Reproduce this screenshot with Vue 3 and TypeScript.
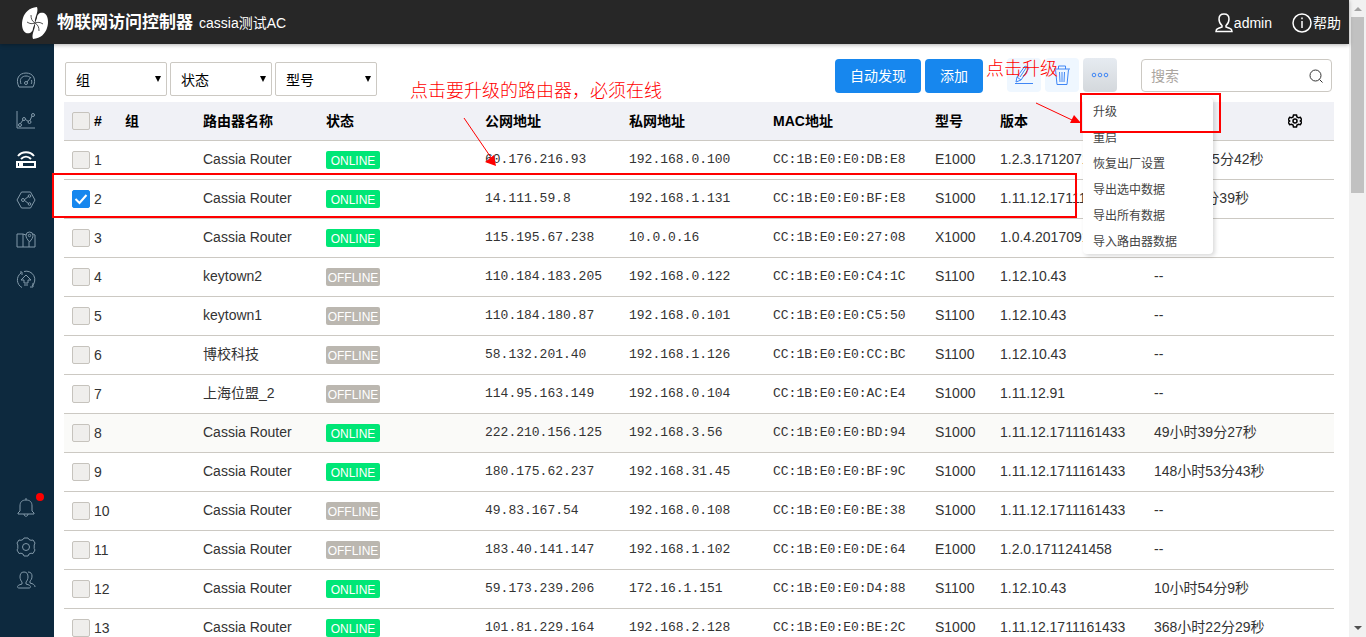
<script setup lang="ts">
import { ref } from 'vue'

interface Router {
  name: string
  online: boolean
  pub: string
  priv: string
  mac: string
  model: string
  version: string
  uptime: string
  selected?: boolean
}

const r = (
  name: string, online: boolean, pub: string, priv: string,
  mac: string, model: string, version: string, uptime: string, selected = false,
): Router => ({ name, online, pub, priv, mac: 'CC:1B:E0:E0:' + mac, model, version, uptime, selected })

const routers = ref<Router[]>([
  r('Cassia Router', true, '60.176.216.93', '192.168.0.100', 'DB:E8', 'E1000', '1.2.3.1712071433', '119小时35分42秒'),
  r('Cassia Router', true, '14.111.59.8', '192.168.1.131', 'BF:E8', 'S1000', '1.11.12.1711161433', '3小时23分39秒', true),
  r('Cassia Router', true, '115.195.67.238', '10.0.0.16', '27:08', 'X1000', '1.0.4.2017091433', '14分16秒'),
  r('keytown2', false, '110.184.183.205', '192.168.0.122', 'C4:1C', 'S1100', '1.12.10.43', '--'),
  r('keytown1', false, '110.184.180.87', '192.168.0.101', 'C5:50', 'S1100', '1.12.10.43', '--'),
  r('博校科技', false, '58.132.201.40', '192.168.1.126', 'CC:BC', 'S1100', '1.12.10.43', '--'),
  r('上海位盟_2', false, '114.95.163.149', '192.168.0.104', 'AC:E4', 'S1000', '1.11.12.91', '--'),
  r('Cassia Router', true, '222.210.156.125', '192.168.3.56', 'BD:94', 'S1000', '1.11.12.1711161433', '49小时39分27秒'),
  r('Cassia Router', true, '180.175.62.237', '192.168.31.45', 'BF:9C', 'S1000', '1.11.12.1711161433', '148小时53分43秒'),
  r('Cassia Router', false, '49.83.167.54', '192.168.0.108', 'BE:38', 'S1000', '1.11.12.1711161433', '--'),
  r('Cassia Router', false, '183.40.141.147', '192.168.1.102', 'DE:64', 'E1000', '1.2.0.1711241458', '--'),
  r('Cassia Router', true, '59.173.239.206', '172.16.1.151', 'D4:88', 'S1100', '1.12.10.43', '10小时54分9秒'),
  r('Cassia Router', true, '101.81.229.164', '192.168.2.128', 'BE:2C', 'S1000', '1.11.12.1711161433', '368小时22分29秒'),
])
const allSelected = ref(false)
const keyword = ref('')
const filters = ['组', '状态', '型号']
const menu = ['升级', '重启', '恢复出厂设置', '导出选中数据', '导出所有数据', '导入路由器数据']
</script>

<template>
  <div class="window">
    <div class="app">
      <header class="top">
        <svg class="logo" viewBox="0 0 28 34" aria-hidden="true">
          <path d="M16 1C8 2 4 6 2 12 0 18 1 25 5 27c4 1 7-1 7-5l2-5c-1-5 4-11 2-16z" fill="#fff" />
          <path d="M12 33c8-1 12-5 14-11 2-6 1-13-3-15-4-1-7 1-7 5l-2 5c1 5-4 11-2 16z" fill="#fff" />
          <path d="M10 9c0 4 1 6 4 8s4 4 4 8M6 16c3 2 5 2 8 1s5-1 8 1" stroke="#272727" stroke-width=".8" />
        </svg>
        <h1>物联网访问控制器</h1>
        <span class="site">cassia测试AC</span>
        <nav class="account">
          <a href="#admin">
            <svg class="person" viewBox="0 0 18 20"><path d="M9 1C5.800 1 4 3 4 6c0 3 1 5 3 6.500V14l-4 1.500C1.500 16 1 17 1 18.500h16c0-1.500-.5-2.500-2-3L11 14v-1.500C13 11 14 9 14 6c0-3-1.800-5-5-5z" /></svg>
            <span>admin</span>
          </a>
          <a href="#help">
            <svg class="info" viewBox="0 0 20 20"><circle cx="10" cy="10" r="9" /><path d="M10 8v7M10 4.500v1.800" /></svg>
            <span>帮助</span>
          </a>
        </nav>
      </header>

      <div class="body">
        <nav class="side">
          <div class="group">
            <a href="#dashboard" aria-label="dashboard"><svg viewBox="0 0 20 20"><path d="M3 17C-1 9 3 3 10 3s11 6 7 14zM5 14c-2-5 1-8 5-8 2 0 3 .5 4 1.500M15.500 10c.5 1.500.3 3-.3 4M11 12l4-5" /><circle cx="10" cy="13" r="1.500" /></svg></a>
            <a href="#chart" aria-label="chart"><svg viewBox="0 0 20 20"><path d="M1 1v17h18M4.500 13.500L7 10M9.500 9.500l3 2M14 10.500L16 6" /><circle cx="4" cy="15" r="1.500" /><circle cx="8" cy="9" r="1.500" /><circle cx="13.500" cy="12" r="1.500" /><circle cx="17" cy="5" r="1.500" /></svg></a>
            <a href="#routers" aria-label="routers" class="active"><svg viewBox="0 0 20 20"><path d="M1 12h18v5H1zM4 13v3M6 13v3M2 6c4-5 12-5 16 0M5 9c3-3 7-3 10 0" /></svg></a>
            <a href="#devices" aria-label="devices"><svg viewBox="0 0 20 20"><path d="M5.500 2h9l4.500 8-4.500 8h-9L1 10zM8 10l5-4M8 10l5 4" /><circle cx="7" cy="10" r="1.500" /><circle cx="13.500" cy="6" r="1.300" /><circle cx="13.500" cy="14" r="1.300" /></svg></a>
            <a href="#map" aria-label="map"><svg viewBox="0 0 20 20"><path d="M10 5L7 4 1 4v13h6l6 0h6V5l-2-1M7 4v13M13 12v5M13.500 12c-2.500-3-3.500-4.500-3.500-6.500a3.500 3.500 0 017 0c0 2-1 3.500-3.500 6.500z" /><circle cx="13.500" cy="5.500" r="1.200" /></svg></a>
            <a href="#upgrade" aria-label="upgrade"><svg viewBox="0 0 20 20"><path d="M6 17.500A8.500 8.500 0 015 3M8 1.500A8.500 8.500 0 0116 16M4 2h2v3M17 13v4h-3M10 5l5 5h-3v3H8v-3H5zM8 15h4" /></svg></a>
          </div>
          <div class="group tools">
            <a href="#alerts" aria-label="alerts" class="alerts"><svg viewBox="0 0 20 20"><path d="M10 1v2M4 14V9c0-4 2-6 6-6s6 2 6 6v5l2 2v1H2v-1zM8 17c0 3 4 3 4 0" /></svg><i class="dot"></i></a>
            <a href="#settings" aria-label="settings"><svg viewBox="0 0 20 20"><path d="M7 2.500L8 1h4l1 1.500 2 .8 2-.3 2 3-.8 2v3.500L19 13l-2 3.500-2-.3-2 .8L12 19H8l-1-2-2-.8-2 .3L1 13l.8-1.500V8L1 6l2-3 2 .3z" /><circle cx="10" cy="10" r="3.500" /></svg></a>
            <a href="#users" aria-label="users"><svg viewBox="0 0 20 20"><path d="M8 2C5 2 4 4 4 7c0 2 1 4 2 5v2l-3 1c-2 1-2 3 0 3h10c2 0 2-2 0-3l-3-1v-2c1-1 2-3 2-5 0-3-1-5-4-5zM12 2c3 0 4 2 4 4 0 3-1 4-2 5v2l3 1c1 1 2 1 2 3" /></svg></a>
          </div>
        </nav>

        <main>
          <div class="bar">
            <div class="filters">
              <label v-for="f in filters" :key="f" class="pick">
                <select :aria-label="f"><option>{{ f }}</option></select>
                <svg viewBox="0 0 6 6"><path d="M0 0h6L3 6z" /></svg>
              </label>
            </div>
            <div class="actions">
              <button type="button" class="blue">自动发现</button>
              <button type="button" class="blue">添加</button>
              <button type="button" class="tool edit" aria-label="edit">
                <svg viewBox="0 0 20 20"><path d="M3 12L11 1l4 2-8 12-5 2zM3 12l4 3M6 12l6-9M1 18.500h18" /></svg>
              </button>
              <button type="button" class="tool" aria-label="delete">
                <svg viewBox="0 0 20 20"><path d="M3.500 4.500l1.500 15h10l1.500-15M2 4h16M6.500 4V1h7v3M7.500 7l.5 10M10 7v10M12.500 7l-.5 10" /></svg>
              </button>
              <div class="more">
                <button type="button" class="tool on" aria-label="more">
                  <svg viewBox="0 0 20 20"><circle cx="4" cy="10" r="1.800" /><circle cx="10" cy="10" r="1.800" /><circle cx="16" cy="10" r="1.800" /></svg>
                </button>
                <div class="menu">
                  <button v-for="m in menu" :key="m" type="button">{{ m }}</button>
                </div>
              </div>
              <label class="search">
                <input v-model="keyword" type="text" placeholder="搜索" aria-label="搜索" />
                <svg viewBox="0 0 14 14"><circle cx="6.500" cy="6.500" r="5.500" /><path d="M10.500 10.500l3 3" /></svg>
              </label>
            </div>
          </div>

          <table>
            <colgroup>
              <col class="c-num" /><col class="c-group" /><col class="c-name" /><col class="c-status" />
              <col class="c-ip" /><col class="c-ip" /><col class="c-mac" /><col class="c-model" />
              <col class="c-version" /><col class="c-time" /><col />
            </colgroup>
            <thead>
              <tr>
                <th><label class="check"><input v-model="allSelected" type="checkbox" /><span>#</span></label></th>
                <th>组</th><th>路由器名称</th><th>状态</th><th>公网地址</th><th>私网地址</th>
                <th>MAC地址</th><th>型号</th><th>版本</th><th></th>
                <th>
                  <button type="button" class="gear" aria-label="columns">
                    <svg viewBox="0 0 14 14"><path d="M5.500 1h3l.5 2 1.500.8 1.900-.5 1.300 2.400L12.300 7l1.400 1.300-1.300 2.400-1.900-.5L9 11l-.5 2h-3L5 11l-1.500-.8-1.900.5L.3 8.300 1.700 7 .3 5.700l1.300-2.400 1.900.5L5 3z" /><circle cx="7" cy="7" r="2" /></svg>
                  </button>
                </th>
              </tr>
            </thead>
            <tbody>
              <tr v-for="(d, i) in routers" :key="d.mac" :class="{ hover: i === 7 }">
                <td><label class="check"><input v-model="d.selected" type="checkbox" /><span>{{ i + 1 }}</span></label></td>
                <td></td>
                <td>{{ d.name }}</td>
                <td><span class="badge" :class="{ online: d.online }">{{ d.online ? 'ONLINE' : 'OFFLINE' }}</span></td>
                <td class="mono">{{ d.pub }}</td>
                <td class="mono">{{ d.priv }}</td>
                <td class="mono">{{ d.mac }}</td>
                <td>{{ d.model }}</td>
                <td>{{ d.version }}</td>
                <td colspan="2">{{ d.uptime }}</td>
              </tr>
            </tbody>
          </table>
        </main>
      </div>
    </div>

    <div class="scroll" aria-hidden="true">
      <svg viewBox="0 0 8 4"><path d="M0 4h8L4 0z" fill="#a3a3a3" /></svg>
      <div class="thumb"></div>
      <svg viewBox="0 0 8 4"><path d="M0 0h8L4 4z" fill="#505050" /></svg>
    </div>

    <div class="note row-box"></div>
    <div class="note menu-box"></div>
    <p class="note tip-row">点击要升级的路由器，必须在线</p>
    <p class="note tip-menu">点击升级</p>
    <svg class="note arrow-row" viewBox="0 0 34 50"><path d="M1 1l28 41" stroke="#f00" /><path d="M33 49l-11-4 9-7z" fill="#f00" /></svg>
    <svg class="note arrow-menu" viewBox="0 0 48 24"><path d="M1 1l36 17" stroke="#f00" /><path d="M46 21l-11 0 4-8z" fill="#f00" /></svg>
  </div>
</template>

<style>
body { overflow: hidden; }
</style>

<style scoped>
* { box-sizing: border-box; }
.window {
  position: relative;
  display: flex;
  height: 100vh;
  overflow: hidden;
  background: #fff;
  color: #333;
  font: 14px/20px "Liberation Sans", "Noto Sans CJK SC", sans-serif;
}
button, input, select { font: inherit; color: inherit; margin: 0; padding: 0; }
svg { display: block; fill: none; }
a { color: inherit; text-decoration: none; }
.app { flex: 1; min-width: 0; display: flex; flex-direction: column; }
.top {
  z-index: 1;
  flex: none;
  display: flex;
  align-items: center;
  height: 44px;
  padding: 1px 8px 0 21px;
  background: #272727;
  color: #fff;
  box-shadow: 0 1px 4px rgba(0, 0, 0, .3);
}
.logo { width: 28px; height: 34px; }
h1 { margin: 0 6px 0 8px; font-size: 17px; line-height: 42px; font-weight: 700; }
.account { display: flex; gap: 20px; margin-left: auto; }
.account a { display: flex; align-items: center; gap: 1px; }
.account svg { stroke: #fff; stroke-width: 1.5; }
.person { width: 18px; height: 20px; }
.info { width: 20px; height: 20px; }
.body { flex: 1; min-height: 0; display: flex; }
.side {
  flex: none;
  width: 54px;
  display: flex;
  flex-direction: column;
  justify-content: space-between;
  padding: 26px 2px 47px 0;
  background: #0d293e;
  color: #8299a9;
}
.group { display: flex; flex-direction: column; align-items: center; gap: 20px; }
.tools { gap: 13px; }
.side svg { width: 20px; height: 20px; stroke: currentColor; }
.side .active { color: #fff; }
.side .active svg { stroke-width: 2; }
.alerts { position: relative; margin-bottom: 7px; }
.dot { position: absolute; right: -8px; top: -4px; width: 8px; height: 8px; border-radius: 50%; background: #f00; }
main { flex: 1; min-width: 0; padding: 14px 15px 0 10px; }
.bar { display: flex; justify-content: space-between; height: 44px; padding: 0 2px 0 1px; }
.filters { display: flex; gap: 3px; padding-top: 4px; }
.pick { position: relative; display: block; width: 102px; height: 34px; }
.pick select {
  width: 100%;
  height: 34px;
  padding: 2px 10px 0;
  appearance: none;
  border: 1px solid #ccc9c3;
  border-radius: 2px;
  background: #fff;
  color: #000;
}
.pick svg { position: absolute; right: 6px; top: 14px; width: 6px; height: 6px; fill: #000; pointer-events: none; }
.actions { display: flex; align-items: flex-start; gap: 4px; }
.blue {
  height: 34px;
  margin-top: 1px;
  padding: 0 15px;
  border: 0;
  border-radius: 4px;
  background: #1787ee;
  color: #fff;
}
.tool {
  display: flex;
  align-items: center;
  justify-content: center;
  width: 34px;
  height: 34px;
  border: 0;
  border-radius: 4px;
  background: #eff7ff;
}
.tool svg { width: 20px; height: 20px; stroke: #3f86f5; }
.edit { margin-left: 20px; }
.on { background: linear-gradient(#e6ebf1, #d4d8dc); }
.more { position: relative; }
.menu {
  position: absolute;
  z-index: 2;
  left: 0;
  top: 40px;
  width: 130px;
  display: flex;
  flex-direction: column;
  border-radius: 4px;
  background: #fff;
  box-shadow: 2px 2px 4px rgba(0, 0, 0, .15);
}
.menu button {
  height: 26px;
  padding: 2px 10px 0;
  border: 0;
  background: none;
  font-size: 12px;
  text-align: left;
  color: #444;
}
.search {
  display: flex;
  align-items: center;
  width: 191px;
  height: 33px;
  margin: 1px 0 0 20px;
  padding: 0 8px 0 9px;
  border: 1px solid #ccc9c3;
  border-radius: 4px;
}
.search input { flex: 1; min-width: 0; border: 0; outline: 0; background: none; }
.search input::placeholder { color: #aaa59f; }
.search svg { width: 14px; height: 14px; stroke: #333; }
table { width: 100%; table-layout: fixed; border-collapse: separate; border-spacing: 0; }
.c-num { width: 53px; }
.c-group { width: 78px; }
.c-name { width: 123px; }
.c-status { width: 159px; }
.c-ip { width: 144px; }
.c-mac { width: 162px; }
.c-model { width: 65px; }
.c-version { width: 154px; }
.c-time { width: 133px; }
th, td { height: 39px; padding: 0 0 0 8px; border-bottom: 1px solid #ccc9c3; text-align: left; white-space: nowrap; }
th { background: #f0f1f6; color: #000; font-weight: 700; }
td { padding-bottom: 2px; }
td:first-child { padding-bottom: 0; }
.hover td { background: #fafaf8; }
td.mono { padding-bottom: 0; font-family: "Liberation Mono", monospace; font-size: 13px; }
.check { display: flex; align-items: center; gap: 4px; }
.check input {
  flex: none;
  width: 18px;
  height: 18px;
  appearance: none;
  border: 1px solid #c6c3bd;
  border-radius: 2px;
  background: #efeeec;
}
.check input:checked {
  border-color: #1787ee;
  background: #1787ee url("data:image/svg+xml,%3Csvg xmlns='http://www.w3.org/2000/svg' viewBox='0 0 16 16' fill='none' stroke='white' stroke-width='2'%3E%3Cpath d='M2.500 8l4 4 7-8'/%3E%3C/svg%3E") center / 16px 16px;
}
.badge {
  display: block;
  width: 54px;
  height: 18px;
  margin-top: 2px;
  border-radius: 2px;
  background: #bbb7b0;
  color: #fff;
  font-size: 12px;
  line-height: 20px;
  text-align: center;
}
.online { background: #00e676; }
.gear { display: block; margin-left: 1px; border: 0; background: none; }
.gear svg { width: 14px; height: 14px; stroke: #000; stroke-width: 1.5; }
.scroll {
  flex: none;
  width: 17px;
  display: flex;
  flex-direction: column;
  align-items: center;
  padding: 7px 0;
  background: #f1f1f1;
}
.scroll svg { width: 8px; height: 4px; }
.thumb { width: 13px; height: 176px; margin: 6px 0 auto; background: #c1c1c1; }
.note { position: absolute; z-index: 3; margin: 0; pointer-events: none; }
.row-box { left: 52px; top: 173px; width: 1025px; height: 45px; border: 2px solid #f00; }
.menu-box { left: 1080px; top: 93px; width: 141px; height: 40px; border: 2px solid #f00; }
.tip-row, .tip-menu { color: #f00; font-size: 18px; line-height: 24px; font-weight: 300; white-space: nowrap; }
.tip-row { left: 410px; top: 79px; }
.tip-menu { left: 986px; top: 57px; }
.arrow-row { left: 463px; top: 117px; width: 34px; height: 50px; }
.arrow-menu { left: 1035px; top: 102px; width: 48px; height: 24px; }
</style>
